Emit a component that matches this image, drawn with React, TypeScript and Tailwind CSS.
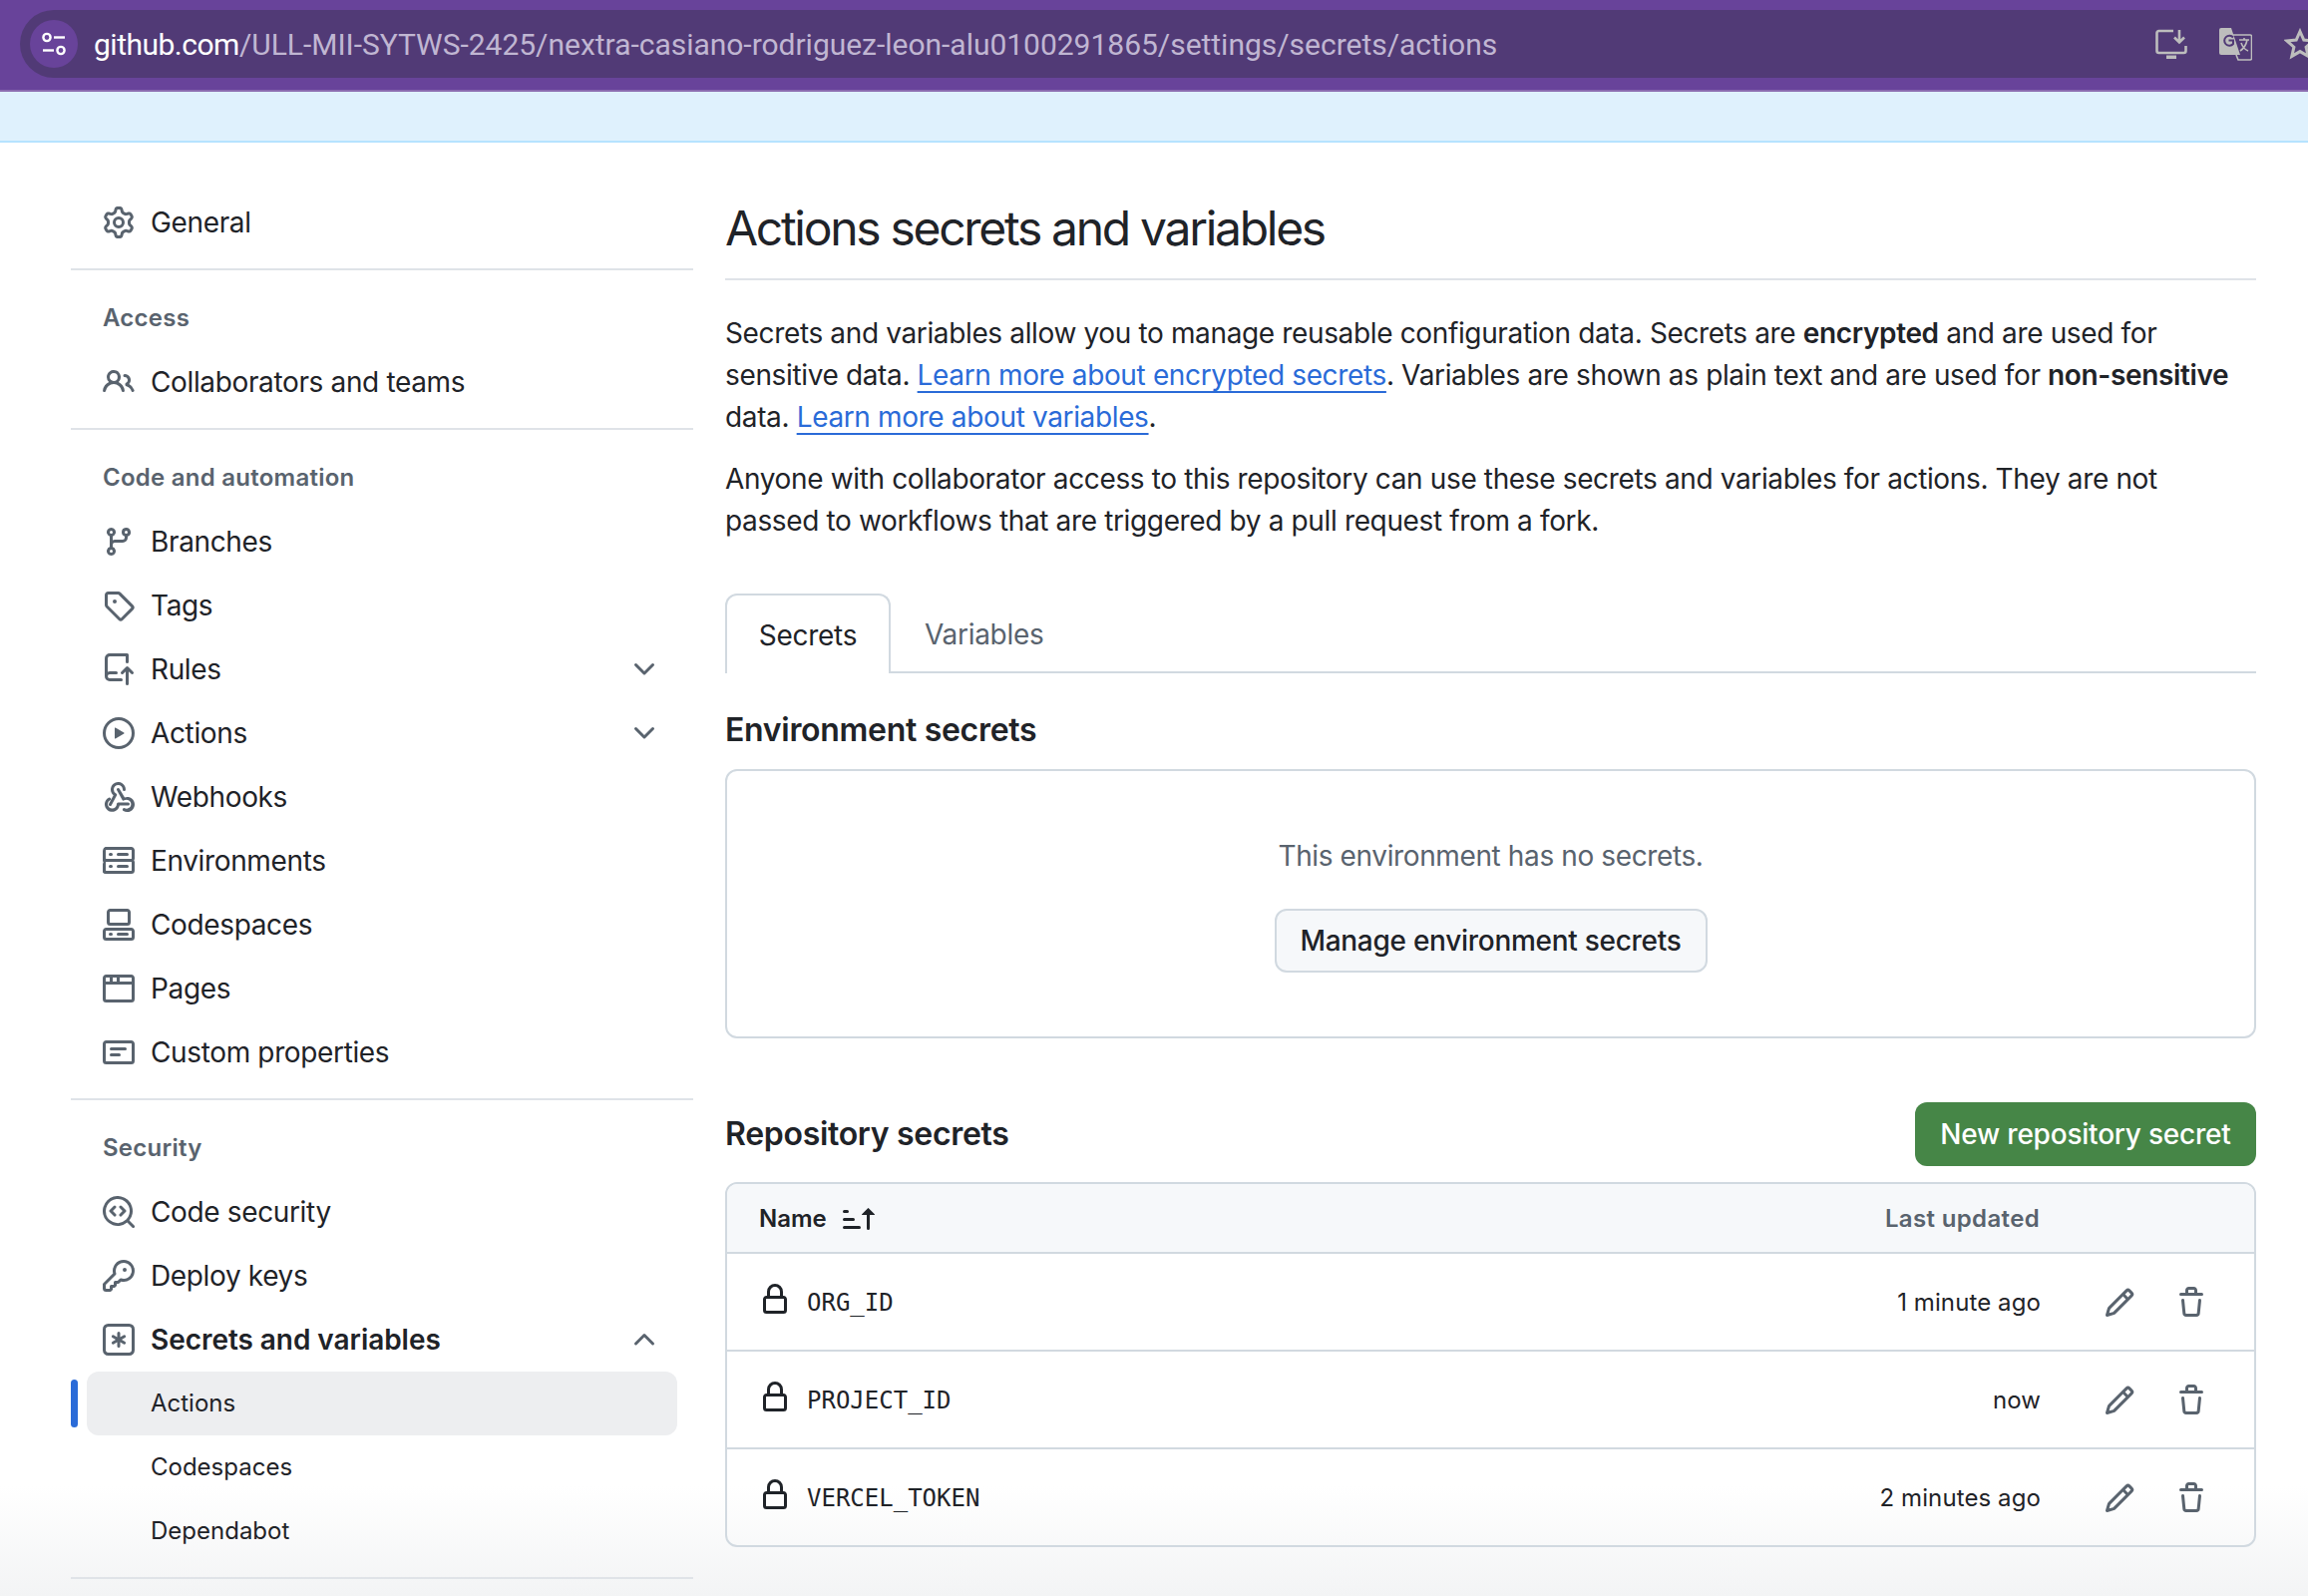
import { ReactNode } from "react"

// 16px octicon paths, react-icons only ships the 24px cut which is too thin here
const octicons = {
    gear: "M8 0a8.2 8.2 0 0 1 .701.031C9.444.095 9.99.645 10.16 1.29l.288 1.107c.018.066.079.158.212.224.231.114.454.243.668.386.123.082.233.09.299.071l1.103-.303c.644-.176 1.392.021 1.82.63.27.385.506.792.704 1.218.315.675.111 1.422-.364 1.891l-.814.806c-.049.048-.098.147-.088.294.016.257.016.515 0 .772-.01.147.038.246.088.294l.814.806c.475.469.679 1.216.364 1.891a7.977 7.977 0 0 1-.704 1.217c-.428.61-1.176.807-1.82.63l-1.102-.302c-.067-.019-.177-.011-.3.071a5.909 5.909 0 0 1-.668.386c-.133.066-.194.158-.211.224l-.29 1.106c-.168.646-.715 1.196-1.458 1.26a8.006 8.006 0 0 1-1.402 0c-.743-.064-1.289-.614-1.458-1.26l-.289-1.106c-.018-.066-.079-.158-.212-.224a5.738 5.738 0 0 1-.668-.386c-.123-.082-.233-.09-.299-.071l-1.103.303c-.644.176-1.392-.021-1.82-.63a8.12 8.12 0 0 1-.704-1.218c-.315-.675-.111-1.422.363-1.891l.815-.806c.05-.048.098-.147.088-.294a6.214 6.214 0 0 1 0-.772c.01-.147-.038-.246-.088-.294l-.815-.806C.635 6.045.431 5.298.746 4.623a7.92 7.92 0 0 1 .704-1.217c.428-.61 1.176-.807 1.82-.63l1.102.302c.067.019.177.011.3-.071.214-.143.437-.272.668-.386.133-.066.194-.158.211-.224l.29-1.106C6.009.645 6.556.095 7.299.03 7.53.01 7.764 0 8 0Zm-.571 1.525c-.036.003-.108.036-.137.146l-.289 1.105c-.147.561-.549.967-.998 1.189-.173.086-.34.183-.5.29-.417.278-.97.423-1.529.27l-1.103-.303c-.109-.03-.175.016-.195.045-.22.312-.412.644-.573.99-.014.031-.021.11.059.19l.815.806c.411.406.562.957.53 1.456a4.709 4.709 0 0 0 0 .582c.032.499-.119 1.05-.53 1.456l-.815.806c-.081.08-.073.159-.059.19.162.346.353.677.573.989.02.03.085.076.195.046l1.102-.303c.56-.153 1.113-.008 1.53.27.161.107.328.204.501.29.447.222.85.629.997 1.189l.289 1.105c.029.109.101.143.137.146a6.6 6.6 0 0 0 1.142 0c.036-.003.108-.036.137-.146l.289-1.105c.147-.561.549-.967.998-1.189.173-.086.34-.183.5-.29.417-.278.97-.423 1.529-.27l1.103.303c.109.029.175-.016.195-.045.22-.313.411-.644.573-.99.014-.031.021-.11-.059-.19l-.815-.806c-.411-.406-.562-.957-.53-1.456a4.709 4.709 0 0 0 0-.582c-.032-.499.119-1.05.53-1.456l.815-.806c.081-.08.073-.159.059-.19a6.464 6.464 0 0 0-.573-.989c-.02-.03-.085-.076-.195-.046l-1.102.303c-.56.153-1.113.008-1.53-.27a4.44 4.44 0 0 0-.501-.29c-.447-.222-.85-.629-.997-1.189l-.289-1.105c-.029-.11-.101-.143-.137-.146a6.6 6.6 0 0 0-1.142 0ZM11 8a3 3 0 1 1-6 0 3 3 0 0 1 6 0ZM9.5 8a1.5 1.5 0 1 0-3.001.001A1.5 1.5 0 0 0 9.5 8Z",
    people: "M2 5.5a3.5 3.5 0 1 1 5.898 2.549 5.508 5.508 0 0 1 3.034 4.084.75.75 0 1 1-1.482.235 4 4 0 0 0-7.9 0 .75.75 0 0 1-1.482-.236A5.507 5.507 0 0 1 3.102 8.05 3.493 3.493 0 0 1 2 5.5ZM11 4a3.001 3.001 0 0 1 2.22 5.018 5.01 5.01 0 0 1 2.56 3.012.749.749 0 0 1-.885.954.752.752 0 0 1-.549-.514 3.507 3.507 0 0 0-2.522-2.372.75.75 0 0 1-.574-.73v-.352a.75.75 0 0 1 .416-.672A1.5 1.5 0 0 0 11 5.5.75.75 0 0 1 11 4Zm-5.5-.5a2 2 0 1 0-.001 3.999A2 2 0 0 0 5.5 3.5Z",
    branch: "M9.5 3.25a2.25 2.25 0 1 1 3 2.122V6A2.5 2.5 0 0 1 10 8.5H6a1 1 0 0 0-1 1v1.128a2.251 2.251 0 1 1-1.5 0V5.372a2.25 2.25 0 1 1 1.5 0v1.836A2.493 2.493 0 0 1 6 7h4a1 1 0 0 0 1-1v-.628A2.25 2.25 0 0 1 9.5 3.25Zm-6 0a.75.75 0 1 0 1.5 0 .75.75 0 0 0-1.5 0Zm8.25-.75a.75.75 0 1 0 0 1.5.75.75 0 0 0 0-1.5ZM4.25 12a.75.75 0 1 0 0 1.5.75.75 0 0 0 0-1.5Z",
    tag: "M1 7.775V2.75C1 1.784 1.784 1 2.75 1h5.025c.464 0 .91.184 1.238.513l6.25 6.25a1.75 1.75 0 0 1 0 2.474l-5.026 5.026a1.75 1.75 0 0 1-2.474 0l-6.25-6.25A1.752 1.752 0 0 1 1 7.775Zm1.5 0c0 .066.026.13.073.177l6.25 6.25a.25.25 0 0 0 .354 0l5.025-5.025a.25.25 0 0 0 0-.354l-6.25-6.25a.25.25 0 0 0-.177-.073H2.75a.25.25 0 0 0-.25.25ZM6 5a1 1 0 1 1 0 2 1 1 0 0 1 0-2Z",
    repoPush: "M1 2.5A2.5 2.5 0 0 1 3.5 0h8.75a.75.75 0 0 1 .75.75v3.5a.75.75 0 0 1-1.5 0V1.5h-8a1 1 0 0 0-1 1v6.708A2.493 2.493 0 0 1 3.5 9h3.25a.75.75 0 0 1 0 1.5H3.5a1 1 0 0 0 0 2h5.75a.75.75 0 0 1 0 1.5H3.5A2.5 2.5 0 0 1 1 11.5Zm13.23 7.79h-.001l-1.224-1.224v6.184a.75.75 0 0 1-1.5 0V9.066L10.28 10.29a.75.75 0 0 1-1.06-1.061l2.505-2.504a.75.75 0 0 1 1.06 0L15.29 9.23a.751.751 0 0 1-.018 1.042.751.751 0 0 1-1.042.018Z",
    play: "M8 0a8 8 0 1 1 0 16A8 8 0 0 1 8 0ZM1.5 8a6.5 6.5 0 1 0 13 0 6.5 6.5 0 0 0-13 0Zm4.879-2.773 4.264 2.559a.25.25 0 0 1 0 .428l-4.264 2.559A.25.25 0 0 1 6 10.559V5.442a.25.25 0 0 1 .379-.215Z",
    webhook: "M5.5 4.25a2.25 2.25 0 0 1 4.5 0 .75.75 0 0 0 1.5 0 3.75 3.75 0 1 0-6.14 2.889l-2.272 4.258a.75.75 0 0 0 1.324.706L7 7.25a.75.75 0 0 0-.309-1.015A2.25 2.25 0 0 1 5.5 4.25ZM7.364 3.607a.75.75 0 0 1 1.03.257l2.608 4.349a3.75 3.75 0 1 1-.628 6.785.75.75 0 0 1 .64-1.357 2.25 2.25 0 1 0-.248-3.98.75.75 0 0 1-1.05-.265L7.107 4.636a.75.75 0 0 1 .257-1.03ZM2.5 11.5a2.25 2.25 0 1 0 4.5 0 .75.75 0 0 1 .75-.75h5a.75.75 0 0 1 0 1.5H8.425a3.751 3.751 0 1 1-5.45-3.9.75.75 0 0 1 .69 1.332A2.25 2.25 0 0 0 2.5 11.5Z",
    server: "M1.75 1h12.5c.966 0 1.75.784 1.75 1.75v4c0 .372-.116.717-.314 1 .198.283.314.628.314 1v4a1.75 1.75 0 0 1-1.75 1.75H1.75A1.75 1.75 0 0 1 0 13.75v-4c0-.372.116-.717.314-1a1.739 1.739 0 0 1-.314-1v-4C0 1.784.784 1 1.75 1ZM1.5 2.75v4c0 .138.112.25.25.25h12.5a.25.25 0 0 0 .25-.25v-4a.25.25 0 0 0-.25-.25H1.75a.25.25 0 0 0-.25.25Zm.25 5.75a.25.25 0 0 0-.25.25v4c0 .138.112.25.25.25h12.5a.25.25 0 0 0 .25-.25v-4a.25.25 0 0 0-.25-.25ZM7 4.75A.75.75 0 0 1 7.75 4h4.5a.75.75 0 0 1 0 1.5h-4.5A.75.75 0 0 1 7 4.75ZM7.75 10h4.5a.75.75 0 0 1 0 1.5h-4.5a.75.75 0 0 1 0-1.5ZM3 4.75A.75.75 0 0 1 3.75 4h.5a.75.75 0 0 1 0 1.5h-.5A.75.75 0 0 1 3 4.75ZM3.75 10h.5a.75.75 0 0 1 0 1.5h-.5a.75.75 0 0 1 0-1.5Z",
    codespaces: "M0 11.25c0-.966.784-1.75 1.75-1.75h12.5c.966 0 1.75.784 1.75 1.75v3A1.75 1.75 0 0 1 14.25 16H1.75A1.75 1.75 0 0 1 0 14.25Zm2-9.5C2 .784 2.784 0 3.75 0h8.5C13.216 0 14 .784 14 1.75v5a1.75 1.75 0 0 1-1.75 1.75h-8.5A1.75 1.75 0 0 1 2 6.75Zm1.75-.25a.25.25 0 0 0-.25.25v5c0 .138.112.25.25.25h8.5a.25.25 0 0 0 .25-.25v-5a.25.25 0 0 0-.25-.25Zm-2 9.5a.25.25 0 0 0-.25.25v3c0 .138.112.25.25.25h12.5a.25.25 0 0 0 .25-.25v-3a.25.25 0 0 0-.25-.25ZM7 12.75a.75.75 0 0 1 .75-.75h4.5a.75.75 0 0 1 0 1.5h-4.5a.75.75 0 0 1-.75-.75Zm-4 0a.75.75 0 0 1 .75-.75h.5a.75.75 0 0 1 0 1.5h-.5a.75.75 0 0 1-.75-.75Z",
    browser: "M0 2.75C0 1.784.784 1 1.75 1h12.5c.966 0 1.75.784 1.75 1.75v10.5A1.75 1.75 0 0 1 14.25 15H1.75A1.75 1.75 0 0 1 0 13.25ZM14.5 6h-13v7.25c0 .138.112.25.25.25h12.5a.25.25 0 0 0 .25-.25Zm-6-3.5v2h6V2.75a.25.25 0 0 0-.25-.25ZM5 2.5v2h2v-2Zm-3.25 0a.25.25 0 0 0-.25.25V4.5h2v-2Z",
    note: "M0 3.75C0 2.784.784 2 1.75 2h12.5c.966 0 1.75.784 1.75 1.75v8.5A1.75 1.75 0 0 1 14.25 14H1.75A1.75 1.75 0 0 1 0 12.25Zm1.75-.25a.25.25 0 0 0-.25.25v8.5c0 .138.112.25.25.25h12.5a.25.25 0 0 0 .25-.25v-8.5a.25.25 0 0 0-.25-.25ZM3.5 6.25a.75.75 0 0 1 .75-.75h7a.75.75 0 0 1 0 1.5h-7a.75.75 0 0 1-.75-.75Zm.75 2.25h4a.75.75 0 0 1 0 1.5h-4a.75.75 0 0 1 0-1.5Z",
    codescan: "M8.47 4.97a.75.75 0 0 0 0 1.06L9.94 7.5 8.47 8.97a.75.75 0 1 0 1.06 1.06l2-2a.75.75 0 0 0 0-1.06l-2-2a.75.75 0 0 0-1.06 0ZM6.53 6.03a.75.75 0 0 0-1.06-1.06l-2 2a.75.75 0 0 0 0 1.06l2 2a.75.75 0 1 0 1.06-1.06L5.06 7.5l1.47-1.47ZM12.246 13.307a7.501 7.501 0 1 1 1.06-1.06l2.474 2.473a.749.749 0 0 1-.326 1.275.749.749 0 0 1-.734-.215ZM1.5 7.5a6.002 6.002 0 0 0 3.608 5.504 6.002 6.002 0 0 0 6.486-1.117.75.75 0 0 1 .292-.293A6 6 0 1 0 1.5 7.5Z",
    key: "M10.5 0a5.499 5.499 0 1 1-1.288 10.848l-.932.932a.749.749 0 0 1-.53.22H7v.75a.749.749 0 0 1-.22.53l-.5.5a.749.749 0 0 1-.53.22H5v.75a.749.749 0 0 1-.22.53l-.5.5a.749.749 0 0 1-.53.22h-2A1.75 1.75 0 0 1 0 14.25v-2c0-.199.079-.389.22-.53l4.932-4.932A5.5 5.5 0 0 1 10.5 0Zm-4 5.5c-.001.431.069.86.205 1.269a.75.75 0 0 1-.181.768L1.5 12.56v1.69c0 .138.112.25.25.25h1.69l.06-.06v-1.19a.75.75 0 0 1 .75-.75h1.19l.06-.06v-1.19a.75.75 0 0 1 .75-.75h1.19l1.023-1.025a.75.75 0 0 1 .768-.18A4 4 0 1 0 6.5 5.5ZM11 6a1 1 0 1 1 0-2 1 1 0 0 1 0 2Z",
    keyAsterisk: "M0 2.75A2.75 2.75 0 0 1 2.75 0h10.5A2.75 2.75 0 0 1 16 2.75v10.5A2.75 2.75 0 0 1 13.25 16H2.75A2.75 2.75 0 0 1 0 13.25ZM2.75 1.5c-.69 0-1.25.56-1.25 1.25v10.5c0 .69.56 1.25 1.25 1.25h10.5c.69 0 1.25-.56 1.25-1.25V2.75c0-.69-.56-1.25-1.25-1.25ZM8 4a.75.75 0 0 1 .75.75V6.7l1.69-.975a.75.75 0 0 1 .75 1.3L9.5 8l1.69.976a.75.75 0 0 1-.75 1.298L8.75 9.3v1.951a.75.75 0 0 1-1.5 0V9.299l-1.69.976a.75.75 0 0 1-.75-1.3L6.5 8l-1.69-.975a.75.75 0 0 1 .75-1.3l1.69.976V4.75A.75.75 0 0 1 8 4Z",
    chevronDown: "M12.78 5.22a.749.749 0 0 1 0 1.06l-4.25 4.25a.749.749 0 0 1-1.06 0L3.22 6.28a.749.749 0 1 1 1.06-1.06L8 8.939l3.72-3.719a.749.749 0 0 1 1.06 0Z",
    chevronUp: "M3.22 10.53a.749.749 0 0 1 0-1.06l4.25-4.25a.749.749 0 0 1 1.06 0l4.25 4.25a.749.749 0 1 1-1.06 1.06L8 6.811 4.28 10.53a.749.749 0 0 1-1.06 0Z",
    lock: "M4 4a4 4 0 0 1 8 0v2h.25c.966 0 1.75.784 1.75 1.75v5.5A1.75 1.75 0 0 1 12.25 15h-8.5A1.75 1.75 0 0 1 2 13.25v-5.5C2 6.784 2.784 6 3.75 6H4Zm8.25 3.5h-8.5a.25.25 0 0 0-.25.25v5.5c0 .138.112.25.25.25h8.5a.25.25 0 0 0 .25-.25v-5.5a.25.25 0 0 0-.25-.25ZM10.5 6V4a2.5 2.5 0 1 0-5 0v2Z",
    pencil: "M11.013 1.427a1.75 1.75 0 0 1 2.474 0l1.086 1.086a1.75 1.75 0 0 1 0 2.474l-8.61 8.61c-.21.21-.47.364-.756.445l-3.251.93a.75.75 0 0 1-.927-.928l.929-3.25c.081-.286.235-.547.445-.758l8.61-8.61Zm.176 4.823L9.75 4.81l-6.286 6.287a.253.253 0 0 0-.064.108l-.558 1.953 1.953-.558a.253.253 0 0 0 .108-.064Zm1.238-3.763a.25.25 0 0 0-.354 0L10.811 3.75l1.439 1.44 1.263-1.263a.25.25 0 0 0 0-.354Z",
    trash: "M11 1.75V3h2.25a.75.75 0 0 1 0 1.5H2.75a.75.75 0 0 1 0-1.5H5V1.75C5 .784 5.784 0 6.75 0h2.5C10.216 0 11 .784 11 1.75ZM4.496 6.675l.66 6.6a.25.25 0 0 0 .249.225h5.19a.25.25 0 0 0 .249-.225l.66-6.6a.75.75 0 0 1 1.492.149l-.66 6.6A1.748 1.748 0 0 1 10.595 15h-5.19a1.75 1.75 0 0 1-1.741-1.575l-.66-6.6a.75.75 0 1 1 1.492-.15ZM6.5 1.75V3h3V1.75a.25.25 0 0 0-.25-.25h-2.5a.25.25 0 0 0-.25.25Z",
    sortAsc: "m12.927 2.573 3 3A.25.25 0 0 1 15.75 6H13.5v6.75a.75.75 0 0 1-1.5 0V6H9.75a.25.25 0 0 1-.177-.427l3-3a.25.25 0 0 1 .354 0ZM0 12.25a.75.75 0 0 1 .75-.75h7.5a.75.75 0 0 1 0 1.5H.75a.75.75 0 0 1-.75-.75Zm0-4a.75.75 0 0 1 .75-.75h4.5a.75.75 0 0 1 0 1.5H.75A.75.75 0 0 1 0 8.25Zm0-4a.75.75 0 0 1 .75-.75h1.5a.75.75 0 0 1 0 1.5H.75A.75.75 0 0 1 0 4.25Z",
}

type IconName = keyof typeof octicons

const linkClass =
    "text-[#2a6bd8] underline decoration-2 underline-offset-[6px] [text-decoration-skip-ink:none]"

function Octicon({ name, className }: { name: IconName; className?: string }) {
    return (
        <svg viewBox="0 0 16 16" fill="currentColor" className={className}>
            <path d={octicons[name]} />
        </svg>
    )
}

function NavItem({
    icon,
    label,
    chevron,
    bold,
}: {
    icon: IconName
    label: string
    chevron?: "down" | "up"
    bold?: boolean
}) {
    return (
        <div className="flex h-16 items-center pl-8">
            <Octicon name={icon} className="size-8 shrink-0 text-[#59636e]" />
            <span className={`ml-4 text-[28px] ${bold ? "font-semibold tracking-[-0.05px]" : "tracking-[-0.36px]"}`}>{label}</span>
            {chevron === "down" && <Octicon name="chevronDown" className="ml-auto mr-[33px] size-8 text-[#59636e]" />}
            {chevron === "up" && <Octicon name="chevronUp" className="ml-auto mr-[33px] size-8 text-[#59636e]" />}
        </div>
    )
}

function SubItem({ label, active }: { label: string; active?: boolean }) {
    return (
        <div className="relative flex h-16 items-center">
            {active && <div className="absolute left-0 top-2 h-12 w-[7px] rounded-full bg-[#2a6bd8]" />}
            <div className={`ml-4 flex h-16 w-[592px] items-center rounded-xl pl-16 text-[24px] ${active ? "bg-[#edeef0]" : ""}`}>
                {label}
            </div>
        </div>
    )
}

function Heading({ children }: { children: ReactNode }) {
    return (
        <div className="mt-4 flex h-16 items-center pl-8 text-[24px] font-semibold tracking-[0.25px] text-[#59636e]">
            {children}
        </div>
    )
}

function Divider() {
    return <div className="mt-[14px] h-[2px] bg-[#dfe3e8]" />
}

function Sidebar() {
    return (
        <aside className="w-[624px] shrink-0 pt-12">
            <NavItem icon="gear" label="General" />
            <Divider />
            <Heading>Access</Heading>
            <NavItem icon="people" label="Collaborators and teams" />
            <Divider />
            <Heading>Code and automation</Heading>
            <NavItem icon="branch" label="Branches" />
            <NavItem icon="tag" label="Tags" />
            <NavItem icon="repoPush" label="Rules" chevron="down" />
            <NavItem icon="play" label="Actions" chevron="down" />
            <NavItem icon="webhook" label="Webhooks" />
            <NavItem icon="server" label="Environments" />
            <NavItem icon="codespaces" label="Codespaces" />
            <NavItem icon="browser" label="Pages" />
            <NavItem icon="note" label="Custom properties" />
            <Divider />
            <Heading>Security</Heading>
            <NavItem icon="codescan" label="Code security" />
            <NavItem icon="key" label="Deploy keys" />
            <NavItem icon="keyAsterisk" label="Secrets and variables" chevron="up" bold />
            <SubItem label="Actions" active />
            <SubItem label="Codespaces" />
            <SubItem label="Dependabot" />
            <Divider />
        </aside>
    )
}

function SecretRow({ name, updated, last }: { name: string; updated: string; last?: boolean }) {
    return (
        <div className={`flex items-center pt-[2px] ${last ? "h-[96px]" : "h-[98px] border-b-2 border-[#d1d9e0]"}`}>
            <Octicon name="lock" className="ml-[32px] size-8 shrink-0 -translate-y-[3px]" />
            <span className="ml-[16px] font-['DejaVu_Sans_Mono',monospace] text-[24px]">{name}</span>
            <span className="ml-auto text-[24px] tracking-[0.1px]">{updated}</span>
            <Octicon name="pencil" className="ml-[63px] size-8 text-[#59636e]" />
            <Octicon name="trash" className="ml-[40px] mr-[47px] size-8 text-[#59636e]" />
        </div>
    )
}

function Main() {
    return (
        <main className="ml-8 w-[1535px] shrink-0 pt-14">
            <h2 className="border-b-2 border-[#dfe3e8] pb-5 text-[48px] leading-[60px] tracking-[-2.3px]">
                Actions secrets and variables
            </h2>
            <p className="mt-8 text-[28px] leading-[42px] tracking-[-0.36px]">
                Secrets and variables allow you to manage reusable configuration data. Secrets are{" "}
                <b className="font-semibold">encrypted</b> and are used for sensitive data.{" "}
                <a className={linkClass}>Learn more about encrypted secrets</a>. Variables are shown as plain text and
                are used for <b className="font-semibold">non-sensitive</b> data.{" "}
                <a className={linkClass}>Learn more about variables</a>.
            </p>
            <p className="mt-5 text-[28px] leading-[42px] tracking-[-0.36px]">
                Anyone with collaborator access to this repository can use these secrets and variables for actions. They
                are not
                <br />
                passed to workflows that are triggered by a pull request from a fork.
            </p>

            {/* Tabs */}
            <div className="mt-[52px] flex h-[80px] border-b-2 border-[#d1d9e0] text-[28px] tracking-[-0.3px]">
                <div className="-mb-[2px] flex h-[80px] w-[166px] items-center justify-center rounded-t-xl border-2 border-b-0 border-[#d1d9e0] bg-white pt-[2px]">
                    Secrets
                </div>
                <div className="ml-[34px] flex items-center pt-[4px] text-[#59636e]">Variables</div>
            </div>

            <h3 className="mt-8 flex h-12 items-center pt-[2px] text-[32px] font-semibold tracking-[-0.3px]">Environment secrets</h3>
            <div className="mt-4 flex h-[270px] flex-col items-center rounded-xl border-2 border-[#d1d9e0] pt-[64px]">
                <div className="text-[28px] leading-[42px] tracking-[-0.38px] text-[#59636e]">This environment has no secrets.</div>
                <div className="mt-[32px] flex h-16 w-[434px] items-center justify-center rounded-xl border-2 border-[#d1d9e0] bg-[#f6f8fa] text-[28px] font-medium tracking-[-0.28px]">
                    Manage environment secrets
                </div>
            </div>

            <div className="mt-[64px] flex h-16 items-center justify-between">
                <h3 className="text-[32px] font-semibold tracking-[-0.3px]">Repository secrets</h3>
                <div className="flex h-16 w-[342px] items-center justify-center rounded-xl bg-[#468647] text-[28px] font-medium tracking-[-0.22px] text-white">
                    New repository secret
                </div>
            </div>

            <div className="mt-4 overflow-hidden rounded-xl border-2 border-[#d1d9e0]">
                <div className="flex h-[70px] items-center border-b-2 border-[#d1d9e0] bg-[#f6f8fa] pt-[1px] text-[24px] font-semibold">
                    <span className="ml-8">Name</span>
                    <Octicon name="sortAsc" className="ml-4 size-8" />
                    <span className="ml-auto mr-[215px] tracking-[0.35px] text-[#59636e]">Last updated</span>
                </div>
                <SecretRow name="ORG_ID" updated="1 minute ago" />
                <SecretRow name="PROJECT_ID" updated="now" />
                <SecretRow name="VERCEL_TOKEN" updated="2 minutes ago" last />
            </div>
        </main>
    )
}

function BrowserBar() {
    return (
        <div className="flex h-[92px] shrink-0 items-start border-b-2 border-[#8b6cb0] bg-[#68439a] pl-5 pt-[10px]">
            <div className="flex h-[68px] w-[2310px] shrink-0 items-center rounded-l-[34px] bg-[#513a76] pl-[10px] pr-2">
                <div className="flex size-12 items-center justify-center rounded-full bg-[#68439a]">
                    <svg width="26" height="26" viewBox="0 0 26 26" fill="none" stroke="white" strokeWidth="2.4">
                        <circle cx="6" cy="6.5" r="3.6" />
                        <path d="M13 6.5h11" />
                        <path d="M2 19.5h11" />
                        <circle cx="20" cy="19.5" r="3.6" />
                    </svg>
                </div>
                <div className="ml-4 whitespace-nowrap font-['Roboto',sans-serif] text-[30px] tracking-[-0.02px] text-[#c0b6d2]">
                    <span className="tracking-[-0.5px] text-white">github.com</span>
                    /ULL-MII-SYTWS-2425/nextra-casiano-rodriguez-leon-alu0100291865/settings/secrets/actions
                </div>
                <div className="ml-auto flex items-center gap-8 text-[#bdbdbd]">
                    <svg width="32" height="30" viewBox="0 0 32 30" fill="none" stroke="currentColor" strokeWidth="2.6">
                        <path d="M18 2H3.5A2 2 0 0 0 1.5 4v18a2 2 0 0 0 2 2h25a2 2 0 0 0 2-2v-5" />
                        <path d="M11 28.5h10" strokeWidth="4" />
                        <path d="M24 1v12M19 8.5l5 5 5-5" />
                    </svg>
                    <svg width="33" height="33" viewBox="0 0 33 33" fill="none">
                        <path d="M2 0h10l9 27H2a2 2 0 0 1-2-2V2a2 2 0 0 1 2-2z" fill="currentColor" />
                        <path d="M14 7h17a1.5 1.5 0 0 1 1.5 1.5v22a1.5 1.5 0 0 1-1.5 1.5H19l-2-5" stroke="currentColor" strokeWidth="1.6" />
                        <path d="M20 12h10M25 10v2M28 12c-1 5-4 9-7 11M22 15c1 3 4 7 7 8" stroke="currentColor" strokeWidth="1.6" />
                        <path d="M14 9.5a5 5 0 1 0 0 6.5v-3.5h-4.5" stroke="#513a76" strokeWidth="2" />
                    </svg>
                    <svg width="32" height="32" viewBox="0 0 32 32" fill="none" stroke="currentColor" strokeWidth="3">
                        <path d="M16 3.5l3.8 8.6 9.4.9-7.1 6.2 2.1 9.2-8.2-4.8-8.2 4.8 2.1-9.2L2.8 13l9.4-.9z" />
                    </svg>
                </div>
            </div>
        </div>
    )
}

export default function App() {
    return (
        <div className="relative flex h-[1600px] w-[2314px] flex-col overflow-hidden bg-white font-['Inter',sans-serif] text-[#1f2328]">
            {/* Fade at the bottom of the page, sits under the content */}
            <div className="pointer-events-none absolute bottom-0 left-0 right-0 h-[110px] bg-gradient-to-b from-white to-[#f3f4f5]" />
            <BrowserBar />
            <div className="h-[51px] shrink-0 border-b-2 border-[#b6e3ff] bg-[#dff1fd]" />
            <div className="relative flex pl-[71px]">
                <Sidebar />
                <Main />
            </div>
        </div>
    )
}
